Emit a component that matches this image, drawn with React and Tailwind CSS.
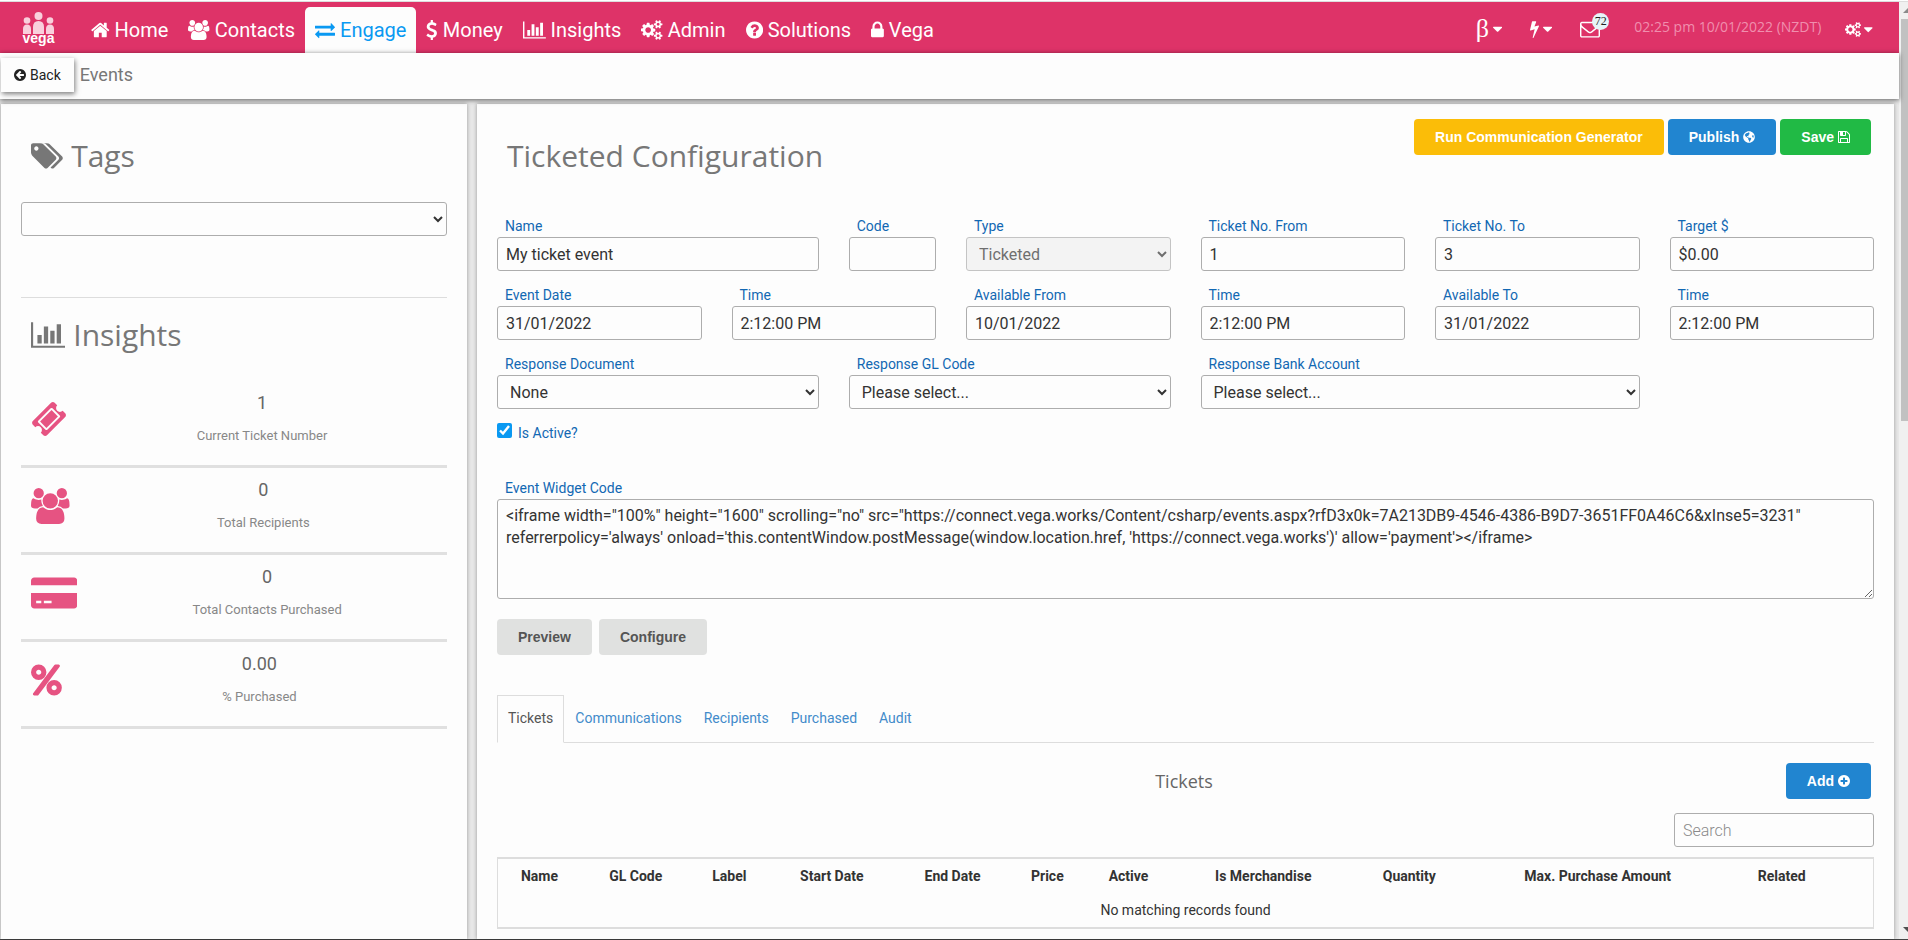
import React, { useState } from "react";
import { FaGlobeAmericas } from "react-icons/fa";

const circle = "q0 209-103 385.5t-279.5 279.5-385.5 103-385.5-103-279.5-279.5-103-385.5 103-385.5 279.5-279.5 385.5-103 385.5 103 279.5 279.5 103 385.5z";

const icons = {
  home: { box: "64 0 1664 1792", d: "M1472 992v480q0 26-19 45t-45 19h-384v-384h-256v384h-384q-26 0-45-19t-19-45v-480q0-1 .5-3t.5-3l575-474 575 474q1 2 1 6zm223-69l-62 74q-8 9-21 11h-3q-13 0-21-7l-692-577-692 577q-12 8-24 7-13-2-21-11l-62-74q-8-10-7-23.5t11-21.5l719-599q32-26 76-26t76 26l244 204v-195q0-14 9-23t23-9h192q14 0 23 9t9 23v408l219 182q10 8 11 21.5t-7 23.5z" },
  users: { box: "64 0 1920 1792", d: "M657 896q-162 5-265 128h-134q-82 0-138-40.5t-56-118.5q0-353 124-353 6 0 43.5 21t97.5 42.5 119 21.5q67 0 133-23-5 37-5 66 0 139 81 256zm1071 637q0 120-73 189.5t-194 69.5h-874q-121 0-194-69.5t-73-189.5q0-53 3.5-103.5t14-109 26.5-108.5 43-97.5 62-81 85.5-53.5 111.5-20q10 0 43 21.5t73 48 107 48 135 21.5 135-21.5 107-48 73-48 43-21.5q61 0 111.5 20t85.5 53.5 62 81 43 97.5 26.5 108.5 14 109 3.5 103.5zm-1024-1277q0 106-75 181t-181 75-181-75-75-181 75-181 181-75 181 75 75 181zm704 384q0 159-112.5 271.5t-271.5 112.5-271.5-112.5-112.5-271.5 112.5-271.5 271.5-112.5 271.5 112.5 112.5 271.5zm576 225q0 78-56 118.5t-138 40.5h-134q-103-123-265-128 81-117 81-256 0-29-5-66 66 23 133 23 59 0 119-21.5t97.5-42.5 43.5-21q124 0 124 353zm-128-609q0 106-75 181t-181 75-181-75-75-181 75-181 181-75 181 75 75 181z" },
  exchange: { box: "0 0 1792 1792", d: "M1792 1184v192q0 13-9.5 22.5t-22.5 9.5h-1376v192q0 13-9.5 22.5t-22.5 9.5q-12 0-24-10l-319-320q-9-9-9-22 0-14 9-23l320-320q9-9 23-9 13 0 22.5 9.5t9.5 22.5v192h1376q13 0 22.5 9.5t9.5 22.5zm0-544q0 14-9 23l-320 320q-9 9-23 9-13 0-22.5-9.5t-9.5-22.5v-192h-1376q-13 0-22.5-9.5t-9.5-22.5v-192q0-13 9.5-22.5t22.5-9.5h1376v-192q0-14 9-23t23-9q12 0 24 10l319 319q9 9 9 23z" },
  dollar: { box: "384 0 1024 1792", d: "M1362 1185q0 153-99.5 263.5t-258.5 136.5v175q0 14-9 23t-23 9h-135q-13 0-22.5-9.5t-9.5-22.5v-175q-66-9-127.5-31t-101.5-44.5-74-48-46.5-37.5-17.5-18q-17-21-2-41l103-135q7-10 23-12 15-2 24 9l2 2q113 99 243 125 37 8 74 8 81 0 142.5-43t61.5-122q0-28-15-53t-33.5-42-58.5-37.5-66-32-80-32.5q-39-16-61.5-25t-61.5-26.5-62.5-31-56.5-35.5-53.5-42.5-43.5-49-35.5-58-21-66.5-8.5-78q0-138 98-242t255-134v-180q0-13 9.5-22.5t22.5-9.5h135q14 0 23 9t9 23v176q57 6 110.5 23t87 33.5 63.5 37.5 39 29 15 14q17 18 5 38l-81 146q-8 15-23 16-14 3-27-7-3-3-14.5-12t-39-26.5-58.5-32-74.5-26-85.5-11.5q-95 0-155 43t-60 111q0 26 8.5 48t29.5 41.5 39.5 33 56 31 60.5 27 70 27.5q53 20 81 31.5t76 35 75.5 42.5 62 50 53 63.5 31.5 76.5 13 94z" },
  chart: { box: "0 0 2048 1792", d: "M640 896v512h-256v-512h256zm384-512v1024h-256v-1024h256zm1024 1152v128h-2048v-1536h128v1408h1920zm-640-896v768h-256v-768h256zm384-384v1152h-256v-1152h256z" },
  cogs: { box: "0 0 1920 1792", d: "M896 896q0-106-75-181t-181-75-181 75-75 181 75 181 181 75 181-75 75-181zm768 512q0-52-38-90t-90-38-90 38-38 90q0 53 37.5 90.5t90.5 37.5 90.5-37.5 37.5-90.5zm0-1024q0-52-38-90t-90-38-90 38-38 90q0 53 37.5 90.5t90.5 37.5 90.5-37.5 37.5-90.5zm-384 421v185q0 10-7 19.5t-16 10.5l-155 24q-11 35-32 76 34 48 90 115 7 11 7 20 0 12-7 19-23 30-82.5 89.5t-78.5 59.5q-11 0-21-7l-115-90q-37 19-77 31-11 108-23 155-7 24-30 24h-186q-11 0-20-7.5t-10-17.5l-23-153q-34-10-75-31l-118 89q-7 7-20 7-11 0-21-8-144-133-144-160 0-9 7-19 10-14 41-53t47-61q-23-44-35-82l-152-24q-10-1-17-9.5t-7-19.5v-185q0-10 7-19.5t16-10.5l155-24q11-35 32-76-34-48-90-115-7-11-7-20 0-12 7-20 22-30 82-89t79-59q11 0 21 7l115 90q34-18 77-32 11-108 23-154 7-24 30-24h186q11 0 20 7.5t10 17.5l23 153q34 10 75 31l118-89q8-7 20-7 11 0 21 8 144 133 144 160 0 8-7 19-12 16-42 54t-45 60q23 48 34 82l152 23q10 2 17 10.5t7 19.5zm640 533v140q0 16-149 31-12 27-30 52 51 113 51 138 0 4-4 7-122 71-124 71-8 0-46-47t-52-68q-20 2-30 2t-30-2q-14 21-52 68t-46 47q-2 0-124-71-4-3-4-7 0-25 51-138-18-25-30-52-149-15-149-31v-140q0-16 149-31 13-29 30-52-51-113-51-138 0-4 4-7 4-2 35-20t59-34 30-16q8 0 46 46.5t52 67.5q20-2 30-2t30 2q51-71 92-112l6-2q4 0 124 70 4 3 4 7 0 25-51 138 17 23 30 52 149 15 149 31zm0-1024v140q0 16-149 31-12 27-30 52 51 113 51 138 0 4-4 7-122 71-124 71-8 0-46-47t-52-68q-20 2-30 2t-30-2q-14 21-52 68t-46 47q-2 0-124-71-4-3-4-7 0-25 51-138-18-25-30-52-149-15-149-31v-140q0-16 149-31 13-29 30-52-51-113-51-138 0-4 4-7 4-2 35-20t59-34 30-16q8 0 46 46.5t52 67.5q20-2 30-2t30 2q51-71 92-112l6-2q4 0 124 70 4 3 4 7 0 25-51 138 17 23 30 52 149 15 149 31z" },
  question: { box: "128 0 1536 1792", d: "M1024 1376v-192q0-14-9-23t-23-9h-192q-14 0-23 9t-9 23v192q0 14 9 23t23 9h192q14 0 23-9t9-23zm256-672q0-88-55.5-163t-138.5-116-170-41q-243 0-371 213-15 24 8 42l132 100q7 6 19 6 16 0 25-12 53-68 86-92 34-24 86-24 48 0 85.5 26t37.5 59q0 38-20 61t-68 45q-63 28-115.5 86.5t-52.5 125.5v36q0 14 9 23t23 9h192q14 0 23-9t9-23q0-19 21.5-49.5t54.5-49.5q32-18 49-28.5t46-35 44.5-48 28-60.5 12.5-81zm384 192" + circle },
  lock: { box: "320 0 1152 1792", d: "M640 768h512v-192q0-106-75-181t-181-75-181 75-75 181v192zm832 96v576q0 40-28 68t-68 28h-960q-40 0-68-28t-28-68v-576q0-40 28-68t68-28h32v-192q0-184 132-316t316-132 316 132 132 316v192h32q40 0 68 28t28 68z" },
  bolt: { box: "448 0 896 1792", d: "M1333 566q18 20 7 44l-540 1157q-13 25-42 25-4 0-14-2-17-5-25.5-19t-4.5-30l197-808-406 101q-4 1-12 1-18 0-31-11-18-15-13-39l201-825q4-14 16-23t28-9h328q19 0 32 12.5t13 29.5q0 8-5 18l-171 463 396-98q8-2 12-2 19 0 34 15z" },
  envelope: { box: "0 0 1792 1792", d: "M1664 1504v-768q-32 36-69 66-268 206-426 338-51 43-83 67t-86.5 48.5-102.5 24.5h-2q-48 0-102.5-24.5t-86.5-48.5-83-67q-158-132-426-338-37-30-69-66v768q0 13 9.5 22.5t22.5 9.5h1472q13 0 22.5-9.5t9.5-22.5zm0-1051v-24.5l-.5-13-3-12.5-5.5-9-9-7.5-14-2.5h-1472q-13 0-22.5 9.5t-9.5 22.5q0 168 147 284 193 152 401 317 6 5 35 29.5t46 37.5 44.5 31.5 50.5 27.5 43 9h2q20 0 43-9t50.5-27.5 44.5-31.5 46-37.5 35-29.5q208-165 401-317 54-43 100.5-115.5t46.5-131.5zm128-37v1088q0 66-47 113t-113 47h-1472q-66 0-113-47t-47-113v-1088q0-66 47-113t113-47h1472q66 0 113 47t47 113z" },
  caret: { box: "384 0 1024 1792", d: "M1408 704q0 26-19 45l-448 448q-19 19-45 19t-45-19l-448-448q-19-19-19-45t19-45 45-19h896q26 0 45 19t19 45z" },
  tags: { box: "0 0 1920 1792", d: "M448 448q0-53-37.5-90.5t-90.5-37.5-90.5 37.5-37.5 90.5 37.5 90.5 90.5 37.5 90.5-37.5 37.5-90.5zm1067 576q0 53-37 90l-491 492q-39 37-91 37-53 0-90-37l-715-716q-38-37-64.5-101t-26.5-117v-416q0-52 38-90t90-38h416q53 0 117 26.5t102 64.5l715 714q37 39 37 91zm384 0q0 53-37 90l-491 492q-39 37-91 37-36 0-59-14t-53-45l470-470q37-37 37-90 0-52-37-91l-715-714q-38-38-102-64.5t-117-26.5h224q53 0 117 26.5t102 64.5l715 714q37 39 37 91z" },
  ticket: { box: "0 0 1792 1792", d: "M1024 452l316 316-572 572-316-316zm-211 979l618-618q19-19 19-45t-19-45l-362-362q-18-18-45-18t-45 18l-618 618q-19 19-19 45t19 45l362 362q18 18 45 18t45-18zm889-637l-907 908q-37 37-90.5 37t-90.5-37l-126-126q56-56 56-136t-56-136-136-56-136 56l-125-126q-37-37-37-90.5t37-90.5l907-906q37-37 90.5-37t90.5 37l125 125q-56 56-56 136t56 136 136 56 136-56l126 125q37 37 37 90.5t-37 90.5z" },
  card: { box: "0 0 2304 1792", d: "M0 1504v-608h2304v608q0 66-47 113t-113 47h-1984q-66 0-113-47t-47-113zm640-224v128h384v-128h-384zm-384 0v128h256v-128h-256zm1888-1152q66 0 113 47t47 113v224h-2304v-224q0-66 47-113t113-47h1984z" },
  percent: { box: "0 0 1536 1792", d: "M1280 1280q0-52-38-90t-90-38-90 38-38 90 38 90 90 38 90-38 38-90zm-768-768q0-52-38-90t-90-38-90 38-38 90 38 90 90 38 90-38 38-90zm1024 768q0 159-112.5 271.5t-271.5 112.5-271.5-112.5-112.5-271.5 112.5-271.5 271.5-112.5 271.5 112.5 112.5 271.5zm-96-1088q0 20-13 38l-1056 1408q-19 26-51 26h-160q-26 0-45-19t-19-45q0-20 13-38l1056-1408q19-26 51-26h160q26 0 45 19t19 45zm-672 320q0 159-112.5 271.5t-271.5 112.5-271.5-112.5-112.5-271.5 112.5-271.5 271.5-112.5 271.5 112.5 112.5 271.5z" },
  save: { box: "128 0 1536 1792", d: "M512 1536h768v-384h-768v384zm896 0h128v-896q0-14-10-38.5t-20-34.5l-281-281q-10-10-34-20t-39-10v416q0 40-28 68t-68 28h-576q-40 0-68-28t-28-68v-416h-128v1280h128v-416q0-40 28-68t68-28h832q40 0 68 28t28 68v416zm-384-928v-320q0-13-9.5-22.5t-22.5-9.5h-192q-13 0-22.5 9.5t-9.5 22.5v320q0 13 9.5 22.5t22.5 9.5h192q13 0 22.5-9.5t9.5-22.5zm640 32v928q0 40-28 68t-68 28h-1344q-40 0-68-28t-28-68v-1344q0-40 28-68t68-28h928q40 0 88 20t76 48l280 280q28 28 48 76t20 88z" },
  plus: { box: "128 0 1536 1792", d: "M1344 960v-128q0-26-19-45t-45-19h-256v-256q0-26-19-45t-45-19h-128q-26 0-45 19t-19 45v256h-256q-26 0-45 19t-19 45v128q0 26 19 45t45 19h256v256q0 26 19 45t45 19h128q26 0 45-19t19-45v-256h256q26 0 45-19t19-45zm320-64" + circle },
  back: { box: "128 0 1536 1792", d: "M1408 960v-128q0-26-19-45t-45-19h-502l189-189q19-19 19-45t-19-45l-91-91q-18-18-45-18t-45 18l-362 362-91 91q-18 18-18 45t18 45l91 91 362 362q18 18 45 18t45-18l91-91q18-18 18-45t-18-45l-189-189h502q26 0 45-19t19-45zm256-64" + circle },
};

const Icon = ({ name, className = "h-[1em]" }) => (
  <svg viewBox={icons[name].box} fill="currentColor" aria-hidden="true" className={`w-auto shrink-0 ${className}`}>
    <path d={icons[name].d} />
  </svg>
);

const Logo = () => (
  <svg viewBox="0 0 34 36" className="h-9 w-[34px]" role="img" aria-label="vega">
    <g fill="#f9d0dc">
      <circle cx="5" cy="8.5" r="3.3" />
      <circle cx="28" cy="8.5" r="3.3" />
      <circle cx="16.5" cy="4" r="4" />
      <path d="M1 22v-5q0-4.500 4-4.500t4 4.500v5z" />
      <path d="M24 22v-5q0-4.500 4-4.500t4 4.500v5z" />
      <path d="M11 22v-7q0-6 5.500-6t5.500 6v7z" />
    </g>
    <text x="16.500" y="31" textAnchor="middle" fill="#fff" fontFamily="Liberation Sans, sans-serif" fontWeight="700" fontSize="14">vega</text>
  </svg>
);

const navItems = [
  { icon: "home", label: "Home" },
  { icon: "users", label: "Contacts" },
  { icon: "exchange", label: "Engage" },
  { icon: "dollar", label: "Money" },
  { icon: "chart", label: "Insights" },
  { icon: "cogs", label: "Admin" },
  { icon: "question", label: "Solutions" },
  { icon: "lock", label: "Vega" },
];

const stats = [
  { icon: "ticket", value: "1", label: "Current Ticket Number" },
  { icon: "users", value: "0", label: "Total Recipients" },
  { icon: "card", value: "0", label: "Total Contacts Purchased" },
  { icon: "percent", value: "0.00", label: "% Purchased" },
];

const fields = [
  { id: "name", label: "Name", span: "col-span-3", value: "My ticket event" },
  { id: "code", label: "Code", span: "col-span-1", value: "" },
  { id: "type", label: "Type", span: "col-span-2", options: ["Ticketed"], disabled: true },
  { id: "ticketFrom", label: "Ticket No. From", span: "col-span-2", value: "1" },
  { id: "ticketTo", label: "Ticket No. To", span: "col-span-2", value: "3" },
  { id: "target", label: "Target $", span: "col-span-2", value: "$0.00" },
  { id: "eventDate", label: "Event Date", span: "col-span-2", value: "31/01/2022" },
  { id: "eventTime", label: "Time", span: "col-span-2", value: "2:12:00 PM" },
  { id: "availableFrom", label: "Available From", span: "col-span-2", value: "10/01/2022" },
  { id: "fromTime", label: "Time", span: "col-span-2", value: "2:12:00 PM" },
  { id: "availableTo", label: "Available To", span: "col-span-2", value: "31/01/2022" },
  { id: "toTime", label: "Time", span: "col-span-2", value: "2:12:00 PM" },
  { id: "document", label: "Response Document", span: "col-span-3", options: ["None"] },
  { id: "glCode", label: "Response GL Code", span: "col-span-3", options: ["Please select..."] },
  { id: "bank", label: "Response Bank Account", span: "col-span-4", options: ["Please select..."] },
];

const tabs = ["Tickets", "Communications", "Recipients", "Purchased", "Audit"];

const columns = ["Name", "GL Code", "Label", "Start Date", "End Date", "Price", "Active", "Is Merchandise", "Quantity", "Max. Purchase Amount", "Related"];

const widgetCode = `<iframe width="100%" height="1600" scrolling="no" src="https://connect.vega.works/Content/csharp/events.aspx?rfD3x0k=7A213DB9-4546-4386-B9D7-3651FF0A46C6&xInse5=3231" referrerpolicy='always' onload='this.contentWindow.postMessage(window.location.href, 'https://connect.vega.works')' allow='payment'></iframe>`;

const control = "w-full h-[34px] rounded-[3px] border border-[#adadad] text-base text-[#333]";
const labelStyle = "block pl-2 pb-px text-sm leading-5 text-[#1268b3]";
const button = "h-9 px-[21px] rounded flex items-center gap-1 font-['Liberation_Sans',sans-serif] font-bold text-sm cursor-pointer";

const Field = ({ field }) => (
  <div className={field.span}>
    <label htmlFor={field.id} className={labelStyle}>{field.label}</label>
    {field.options ? (
      <select
        id={field.id}
        disabled={field.disabled}
        className={`${control} px-2 ${field.disabled ? "bg-[#efefef] opacity-70" : "bg-[#fdfdfd]"}`}
      >
        {field.options.map((option) => <option key={option}>{option}</option>)}
      </select>
    ) : (
      <input id={field.id} type="text" defaultValue={field.value} className={`${control} px-2 bg-[#fdfdfd]`} />
    )}
  </div>
);

const Navbar = () => (
  <header className="flex h-[51px] bg-[#de3368] text-white">
    <a href="#" className="pl-[22px] pt-2.5 pr-[25px]"><Logo /></a>
    <nav className="flex pt-[5px] text-xl">
      {navItems.map((item) => (
        <a
          key={item.label}
          href="#"
          className={`flex items-center gap-[5px] px-2.5 rounded-t-[5px] ${item.label === "Engage" ? "bg-[#fdfdfd] text-[#0a99f2]" : ""}`}
        >
          <Icon name={item.icon} />
          {item.label}
        </a>
      ))}
    </nav>
    <div className="ml-auto flex items-center pr-[26px] pt-[3px]">
      <button type="button" className="flex items-center gap-1 mr-7 cursor-pointer" aria-label="Beta">
        <span className="font-['Liberation_Serif',serif] text-[26px] leading-8">β</span>
        <Icon name="caret" className="h-4" />
      </button>
      <button type="button" className="flex items-center gap-1 mr-7 cursor-pointer" aria-label="Quick actions">
        <Icon name="bolt" className="h-[18px]" />
        <Icon name="caret" className="h-4" />
      </button>
      <button type="button" className="relative mr-[34px] cursor-pointer" aria-label="Messages">
        <Icon name="envelope" className="h-5" />
        <span className="absolute -top-1.5 left-3 w-[17px] h-[17px] rounded-full bg-[#e6f4f8] text-[#222] text-xs leading-[17px] font-['Liberation_Serif',serif] text-center">72</span>
      </button>
      <span className="mr-6 pb-1 font-['Open_Sans',sans-serif] text-sm text-[#f08fae]">02:25 pm 10/01/2022 (NZDT)</span>
      <button type="button" className="flex items-center gap-[3px] cursor-pointer" aria-label="Settings">
        <Icon name="cogs" className="h-[15px]" />
        <Icon name="caret" className="h-[15px]" />
      </button>
    </div>
  </header>
);

const Sidebar = () => (
  <aside className="w-[466px] shrink-0 px-5 bg-[#fdfdfd] shadow-[0_0_4px_rgba(0,0,0,0.35)]">
    <h2 className="flex items-center gap-2 pl-2.5 pt-8 font-['Open_Sans',sans-serif] text-3xl leading-10 text-[#777]">
      <Icon name="tags" /> <label htmlFor="tags">Tags</label>
    </h2>
    <select id="tags" className={`${control} mt-[26px] px-2 bg-[#fdfdfd]`}>
      <option></option>
    </select>
    <hr className="mt-[61px] border-[#ddd]" />
    <h2 className="flex items-center gap-2 pl-2.5 mt-[17px] mb-[26px] font-['Open_Sans',sans-serif] text-3xl leading-10 text-[#777]">
      <Icon name="chart" /> Insights
    </h2>
    {stats.map((stat) => (
      <div key={stat.label} className="flex gap-5 h-[87px] px-2.5 border-b-[3px] border-[#e0e0e0]">
        <Icon name={stat.icon} className="h-9 mt-5 text-[#e65382]" />
        <div className="flex-1 pt-2.5 text-center">
          <p className="text-lg leading-6 text-[#666]">{stat.value}</p>
          <p className="mt-[11px] text-[13px] leading-5 text-[#888]">{stat.label}</p>
        </div>
      </div>
    ))}
  </aside>
);

const Configuration = () => {
  const [active, setActive] = useState(true);
  const [tab, setTab] = useState("Tickets");

  return (
    <main className="flex-1 min-w-0 px-5 pb-2.5 bg-[#fdfdfd] shadow-[0_0_4px_rgba(0,0,0,0.35)]">
      <div className="flex justify-between pt-[15px] pr-[3px]">
        <h1 className="pl-2.5 pt-[17px] font-['Open_Sans',sans-serif] text-3xl leading-10 text-[#777]">Ticketed Configuration</h1>
        <div className="flex gap-1 text-white">
          <button type="button" className={`${button} bg-[#fbbd08]`}>Run Communication Generator</button>
          <button type="button" className={`${button} bg-[#2185d0]`}>Publish <FaGlobeAmericas className="w-3 h-3" /></button>
          <button type="button" className={`${button} bg-[#21ba45]`}>Save <Icon name="save" /></button>
        </div>
      </div>

      <form className="mt-10" onSubmit={(e) => e.preventDefault()}>
        <div className="grid grid-cols-12 gap-x-[30px] gap-y-3.5">
          {fields.map((field) => <Field key={field.id} field={field} />)}
        </div>
        <label className="flex items-start gap-1.5 mt-3.5 text-sm leading-5 text-[#1268b3]">
          <input
            type="checkbox"
            checked={active}
            onChange={(e) => setActive(e.target.checked)}
            className="w-[15px] h-[15px] accent-[#0a99f2]"
          />
          Is Active?
        </label>

        <label htmlFor="widget" className={`${labelStyle} mt-[35px]`}>Event Widget Code</label>
        <textarea
          id="widget"
          defaultValue={widgetCode}
          className="block w-full h-[100px] px-2 py-[5px] rounded-[3px] border border-[#adadad] text-base leading-[22px] text-[#333]"
        />
        <div className="flex gap-[7px] mt-5">
          <button type="button" className={`${button} bg-[#e0e1e0] text-[#555]`}>Preview</button>
          <button type="button" className={`${button} bg-[#e0e1e0] text-[#555]`}>Configure</button>
        </div>
      </form>

      {/* ---------------- Tabs --------------------- */}
      <div className="flex mt-10 h-12 text-sm border-b border-[#ddd]" role="tablist">
        {tabs.map((name) => (
          <button
            key={name}
            type="button"
            role="tab"
            aria-selected={tab === name}
            onClick={() => setTab(name)}
            className={`h-12 px-2.5 pb-0.5 border cursor-pointer ${tab === name ? "border-[#ddd] border-b-[#fdfdfd] bg-[#fdfdfd] text-[#555]" : "border-transparent text-[#428bca]"}`}
          >
            {name}
          </button>
        ))}
      </div>

      <div className="grid grid-cols-3 items-center mt-5 pr-[3px]">
        <h3 className="col-start-2 text-center font-['Open_Sans',sans-serif] text-lg text-[#666]">{tab}</h3>
        <button type="button" className={`${button} justify-self-end bg-[#2185d0] text-white`}>Add <Icon name="plus" /></button>
      </div>
      <div className="flex justify-end mt-3.5">
        <input type="search" placeholder="Search" aria-label="Search" className="w-[200px] h-[34px] px-2 rounded-[3px] border border-[#adadad] text-base font-light placeholder:text-[#8a8a8a]" />
      </div>
      <table className="w-full mt-2.5 border border-y-2 border-[#ddd] text-sm text-[#333] text-center">
        <thead>
          <tr className="h-[34px]">
            {columns.map((column) => <th key={column} className="px-1.5 font-bold whitespace-nowrap">{column}</th>)}
            <th className="px-3"></th>
          </tr>
        </thead>
        <tbody>
          <tr className="h-9">
            <td colSpan={columns.length + 1}>No matching records found</td>
          </tr>
        </tbody>
      </table>
    </main>
  );
};

const Scrollbar = () => (
  <div className="flex flex-col w-[9px] shrink-0 pl-0.5 bg-[#f0f0f0]" aria-hidden="true">
    <svg viewBox="0 0 7 17" className="w-[7px] h-[17px]"><path d="M2 11l5-5v5z" fill="#8a8a8a" /></svg>
    <div className="h-[402px] bg-[#c1c1c1]"></div>
    <svg viewBox="0 0 7 17" className="w-[7px] h-[17px] mt-auto"><path d="M2 5h5v5z" fill="#505050" /></svg>
  </div>
);

const App = () => {
  return (
    <div className="min-h-screen flex flex-col bg-[#e8e8e8] font-[Roboto,sans-serif] border-b border-[#444]">
      <div className="h-0.5 bg-white border-b border-[#ddd]"></div>
      <div className="flex flex-1">
        <div className="flex flex-col flex-1 min-w-0">
          <Navbar />
          <div className="relative flex items-start gap-1.5 h-[46px] pl-px pt-[5px] bg-[#fdfdfd] shadow-[0_1px_5px_rgba(0,0,0,0.6)]">
            <button type="button" className="flex items-center gap-1 h-[34px] px-[13px] text-sm text-[#222] bg-[#fdfdfd] shadow-[1px_2px_5px_rgba(0,0,0,0.5)] cursor-pointer">
              <Icon name="back" /> Back
            </button>
            <span className="text-lg leading-[34px] text-[#777]">Events</span>
          </div>
          <div className="flex flex-1 gap-2.5 mt-[5px] pl-px pr-[5px]">
            <Sidebar />
            <Configuration />
          </div>
        </div>
        <Scrollbar />
      </div>
    </div>
  );
};

export default App;
